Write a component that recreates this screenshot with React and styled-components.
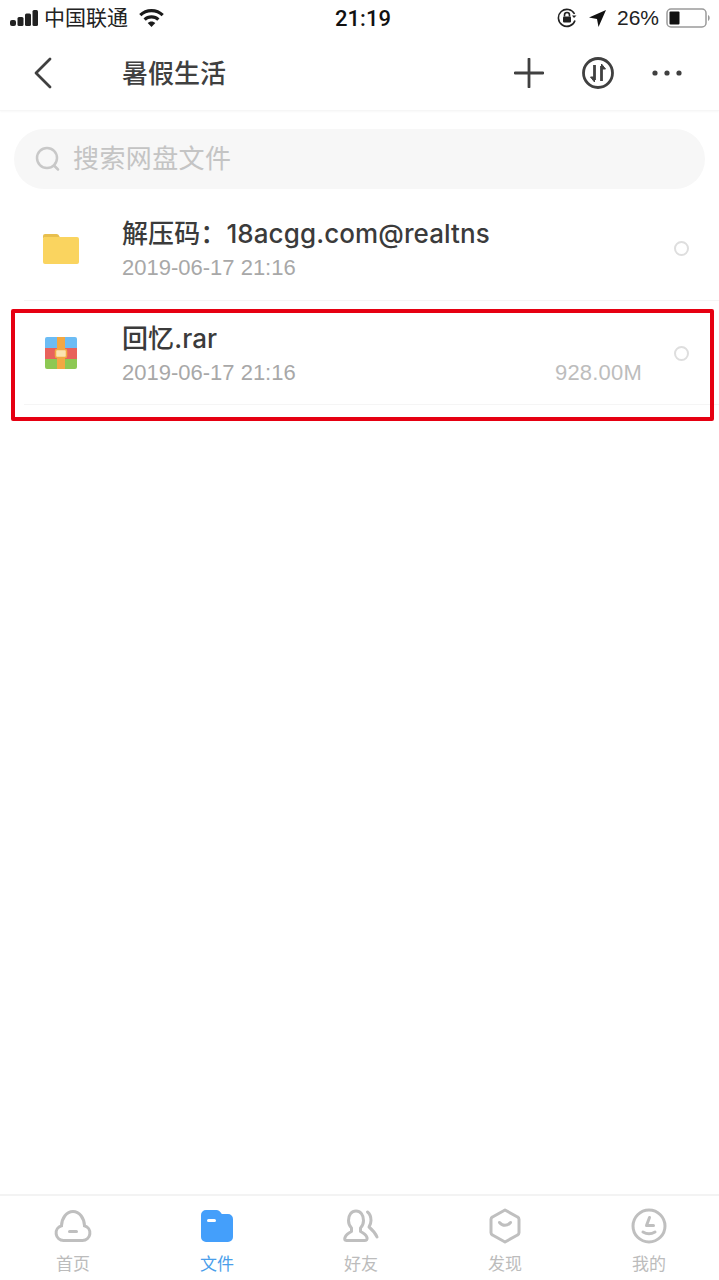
import React from 'react';
import styled, { createGlobalStyle } from 'styled-components';

const GlobalStyle = createGlobalStyle`
  html, body {
    margin: 0;
    padding: 0;
    background: #fff;
  }
  * {
    box-sizing: border-box;
  }
`;

const FONT = `"Liberation Sans", "Noto Sans CJK SC", sans-serif`;

const Page = styled.div`
  width: 719px;
  height: 1280px;
  display: flex;
  flex-direction: column;
  background: #fff;
  font-family: ${FONT};
  overflow: hidden;
`;

const StatusBar = styled.div`
  height: 36px;
  padding: 0 9px 0 10px;
  display: grid;
  grid-template-columns: 1fr auto 1fr;
  align-items: center;
  color: #1c1c1c;
`;

const StatusLeft = styled.div`
  display: flex;
  align-items: center;
  gap: 6px;
  font-size: 21px;
  color: #222;
`;

const Carrier = styled.span`
  padding-bottom: 4px;
  margin-right: 5px;
`;

const StatusRight = styled.div`
  display: flex;
  align-items: center;
  justify-content: flex-end;
  gap: 7px;
  font-size: 21px;
  color: #222;
`;

const StatusGlyphs = styled.div`
  display: flex;
  align-items: center;
  gap: 12px;
  margin-right: 4px;
`;

const Clock = styled.div`
  margin-left: 6px;
  font-family: Roboto, sans-serif;
  font-size: 22px;
  font-weight: 500;
  color: #111;
`;

const Header = styled.div`
  height: 75px;
  padding: 0 37px 0 33px;
  display: flex;
  align-items: center;
  border-bottom: 1px solid #f6f6f6;
  box-shadow: 0 1px 2px rgba(0, 0, 0, 0.03);
`;

const Title = styled.div`
  margin-left: 69px;
  padding-bottom: 4px;
  flex: 1;
  font-size: 26px;
  font-weight: 500;
  color: #404040;
`;

const HeaderActions = styled.div`
  display: flex;
  align-items: center;
  gap: 38px;
`;

const SearchWrap = styled.div`
  padding: 18px 14px 0;
`;

const SearchBar = styled.div`
  height: 60px;
  border-radius: 30px;
  background: #f7f7f7;
  display: flex;
  align-items: center;
  padding-left: 21px;
  gap: 12px;
  font-size: 26px;
  letter-spacing: 0.4px;
  color: #c4c4c4;
`;

const SearchText = styled.span`
  padding-bottom: 5px;
`;

const List = styled.div`
  position: relative;
  margin-top: 8px;
`;

const Row = styled.div`
  height: 104px;
  margin-left: 24px;
  padding: ${(p) => p.$top}px 30px 0 17px;
  display: flex;
  border-bottom: 1px solid #f5f5f5;
`;

const FileIcon = styled.div`
  width: 40px;
  height: ${(p) => p.$height}px;
  margin-right: 41px;
  display: flex;
  align-items: center;
  justify-content: center;
`;

const RowText = styled.div`
  flex: 1;
  min-width: 0;
`;

const FileName = styled.div`
  font-family: Inter, "Noto Sans CJK SC", sans-serif;
  font-size: 26px;
  line-height: 34px;
  font-weight: 500;
  letter-spacing: 0.1px;
  color: #3b3b3b;
`;

const FileMeta = styled.div`
  margin-top: 2px;
  padding-right: 32px;
  display: flex;
  justify-content: space-between;
  font-size: 22px;
  line-height: 30px;
  color: #a8a8a8;
`;

const FileSize = styled.span`
  letter-spacing: 0.2px;
  color: #bdbdbd;
`;

const Radio = styled.div`
  width: 15px;
  height: 15px;
  margin-top: 24px;
  border: 2px solid #dedede;
  border-radius: 50%;
`;

const Highlight = styled.div`
  position: absolute;
  left: 11px;
  top: 112px;
  width: 703px;
  height: 112px;
  border: 4px solid #e60012;
  border-radius: 2px;
  pointer-events: none;
`;

const Spacer = styled.div`
  flex: 1;
`;

const TabBar = styled.div`
  height: 86px;
  padding-left: 1px;
  border-top: 2px solid #f3f3f3;
  display: grid;
  grid-template-columns: repeat(5, 144px);
`;

const Tab = styled.div`
  display: flex;
  flex-direction: column;
  align-items: center;
  padding-top: 10px;
  font-size: 17px;
  line-height: 22px;
  color: ${(p) => (p.$active ? '#4a9eea' : '#bcbcbc')};
`;

const TabIcon = styled.div`
  height: 40px;
  margin-bottom: 8px;
  display: flex;
  align-items: center;
`;

const tabs = [
  {
    label: '首页',
    icon: (
      <svg width="38" height="32" viewBox="0 0 38 32" fill="none" stroke="#bfbfbf" strokeWidth="3" strokeLinecap="round">
        <path d="M9.500 30.500h19a7.500 7.500 0 0 0 2-14.700C30.200 8 25.500 1.500 19 1.500S7.800 8 7.500 15.800a7.500 7.500 0 0 0 2 14.700z" />
        <path d="M15.500 21.500h7" />
      </svg>
    ),
  },
  {
    label: '文件',
    active: true,
    icon: (
      <svg width="32" height="32" viewBox="0 0 32 32">
        <path d="M5 0h10.500c2 0 3 1 4.200 2.600L20.800 4H27a5 5 0 0 1 5 5v18a5 5 0 0 1-5 5H5a5 5 0 0 1-5-5V5a5 5 0 0 1 5-5z" fill="#449ffb" />
        <rect x="6" y="9" width="9" height="3" rx="1.500" fill="#fff" />
      </svg>
    ),
  },
  {
    label: '好友',
    icon: (
      <svg width="36" height="34" viewBox="0 0 36 34" fill="none" stroke="#bfbfbf" strokeWidth="3" strokeLinecap="round" strokeLinejoin="round">
        <path d="M3.500 31.500h18c2 0 3-1.200 2.500-3-1-2.800-3.500-4.600-6.500-6v-3.500c2-2 3-4.500 3-7.500C20.500 6 17.500 2 13 2S5.500 6 5.500 11.500c0 3 1 5.500 3 7.500v3.500c-3 1.400-5.500 3.200-6.500 6-.5 1.800-.5 3 1.500 3z" />
        <path d="M24.500 3c2.500 2 3.500 5 3.500 8.500 0 2.500-.8 4.500-2 6.500 3 2.500 6 5.500 8 10" />
      </svg>
    ),
  },
  {
    label: '发现',
    icon: (
      <svg width="32" height="36" viewBox="0 0 32 36" fill="none" stroke="#bfbfbf" strokeWidth="3" strokeLinecap="round" strokeLinejoin="round">
        <path d="M16 2l12.500 7a2.500 2.500 0 0 1 1.500 2.200v13.600a2.500 2.500 0 0 1-1.500 2.200L16 34 3.500 27A2.500 2.500 0 0 1 2 24.800V11.200A2.500 2.500 0 0 1 3.500 9z" />
        <path d="M10.500 14.500c1.500 1.800 3.500 2.800 5.500 2.800s4-1 5.500-2.800" />
      </svg>
    ),
  },
  {
    label: '我的',
    icon: (
      <svg width="36" height="36" viewBox="0 0 36 36" fill="none" stroke="#bfbfbf" strokeWidth="3" strokeLinecap="round" strokeLinejoin="round">
        <circle cx="18" cy="18" r="16" />
        <path d="M18.500 9.500l-3 8h7" />
        <path d="M12 24c3.500 2 8.500 2 12 0" />
      </svg>
    ),
  },
];

function SignalIcon() {
  return (
    <svg width="28" height="16" viewBox="0 0 28 16" fill="#222">
      <rect x="0" y="10" width="6" height="6" rx="2" />
      <rect x="7.500" y="7" width="6" height="9" rx="1.500" />
      <rect x="15" y="3.500" width="6" height="12.500" rx="1.500" />
      <rect x="22.500" y="0" width="5.500" height="16" rx="1.500" />
    </svg>
  );
}

function WifiIcon() {
  return (
    <svg width="25" height="18" viewBox="0 0 25 18" fill="#1a1a1a">
      <path d="M12.500 0C17.300 0 21.600 1.900 24.800 5l-2.200 2.300c-2.600-2.500-6.200-4-10.100-4s-7.500 1.500-10.100 4L.2 5C3.400 1.900 7.700 0 12.500 0z" />
      <path d="M12.500 6.300c3.100 0 5.900 1.200 8 3.200l-2.300 2.300c-1.500-1.400-3.500-2.300-5.700-2.300s-4.200.9-5.700 2.300L4.500 9.500c2.100-2 4.900-3.200 8-3.200z" />
      <path d="M12.500 12.400c1.500 0 2.800.6 3.800 1.500L12.500 18l-3.800-4.100c1-.9 2.300-1.500 3.800-1.500z" />
    </svg>
  );
}

function LockIcon() {
  return (
    <svg width="20" height="20" viewBox="0 0 20 20" fill="none" stroke="#222" strokeWidth="1.600">
      <path d="M18 12.500A8.500 8.500 0 1 1 17.500 6" />
      <path d="M19.500 7.500l-2.500 2.500-2-2.500z" fill="#222" stroke="none" />
      <rect x="6" y="8.500" width="8" height="6" rx="1" fill="#222" stroke="none" />
      <path d="M7.500 8.500V7a2.500 2.500 0 0 1 5 0v1.500" />
    </svg>
  );
}

function LocationIcon() {
  return (
    <svg width="17" height="17" viewBox="0 0 17 17" fill="#111">
      <path d="M17 0L9.500 17 8 9 0 7.500z" />
    </svg>
  );
}

function BatteryIcon() {
  return (
    <svg width="44" height="20" viewBox="0 0 44 20" fill="none">
      <rect x="1" y="1" width="39" height="18" rx="4" stroke="#9a9a9a" strokeWidth="1.500" />
      <rect x="3.500" y="3.500" width="10" height="13" rx="1" fill="#111" />
      <path d="M42 7v6c1-.4 1.700-1.600 1.700-3S43 7.400 42 7z" fill="#9a9a9a" />
    </svg>
  );
}

function FolderIcon() {
  return (
    <svg width="36" height="31" viewBox="0 0 36 31">
      <path d="M0 3a2 2 0 0 1 2-2h11.500c1.500 0 2.500 1 3.500 3.500H2a2 2 0 0 0-2 2z" fill="#e8bf4e" />
      <path d="M0 6a2 2 0 0 1 2-2h32a2 2 0 0 1 2 2v23a2 2 0 0 1-2 2H2a2 2 0 0 1-2-2z" fill="#fad45f" />
    </svg>
  );
}

function RarIcon() {
  return (
    <svg width="32" height="32" viewBox="0 0 32 32">
      <path d="M2 0h28a2 2 0 0 1 2 2v9H0V2a2 2 0 0 1 2-2z" fill="#6cbcf4" />
      <rect x="0" y="11" width="32" height="11" fill="#e8625b" />
      <path d="M0 22h32v8a2 2 0 0 1-2 2H2a2 2 0 0 1-2-2z" fill="#8dc853" />
      <rect x="12" y="0" width="8" height="32" fill="#f2a843" />
      <rect x="10.500" y="12.500" width="11" height="8" rx="1.500" fill="#fbe3b0" stroke="#f2a843" strokeWidth="1.500" />
    </svg>
  );
}

export default function App() {
  return (
    <Page>
      <GlobalStyle />
      <StatusBar>
        <StatusLeft>
          <SignalIcon />
          <Carrier>中国联通</Carrier>
          <WifiIcon />
        </StatusLeft>
        <Clock>21:19</Clock>
        <StatusRight>
          <StatusGlyphs>
            <LockIcon />
            <LocationIcon />
          </StatusGlyphs>
          <span>26%</span>
          <BatteryIcon />
        </StatusRight>
      </StatusBar>

      <Header>
        <svg width="20" height="32" viewBox="0 0 20 32" fill="none" stroke="#404040" strokeWidth="2.800" strokeLinecap="round" strokeLinejoin="round">
          <path d="M17 2L3 16l14 14" />
        </svg>
        <Title>暑假生活</Title>
        <HeaderActions>
          <svg width="30" height="30" viewBox="0 0 30 30" stroke="#404040" strokeWidth="2.800" strokeLinecap="round">
            <path d="M15 1v28M1 15h28" />
          </svg>
          <svg width="32" height="32" viewBox="0 0 32 32" fill="none" stroke="#404040" strokeWidth="2.800">
            <circle cx="16" cy="16" r="14.500" />
            <path d="M12.500 8v15" />
            <path d="M19.500 24V9" />
            <path d="M12.500 25l-4-5h4z" fill="#404040" strokeWidth="1" />
            <path d="M19.500 7l4 5h-4z" fill="#404040" strokeWidth="1" />
          </svg>
          <svg width="30" height="6" viewBox="0 0 30 6" fill="#404040">
            <circle cx="3" cy="3" r="2.600" />
            <circle cx="15" cy="3" r="2.600" />
            <circle cx="27" cy="3" r="2.600" />
          </svg>
        </HeaderActions>
      </Header>

      <SearchWrap>
        <SearchBar>
          <svg width="26" height="26" viewBox="0 0 26 26" fill="none" stroke="#c8c8c8" strokeWidth="2.500" strokeLinecap="round">
            <circle cx="12" cy="12" r="10" />
            <path d="M19.500 20l3.500 3.500" />
          </svg>
          <SearchText>搜索网盘文件</SearchText>
        </SearchBar>
      </SearchWrap>

      <List>
        <Row $top={20}>
          <FileIcon $height={62}><FolderIcon /></FileIcon>
          <RowText>
            <FileName>解压码：18acgg.com@realtns</FileName>
            <FileMeta>
              <span>2019-06-17 21:16</span>
            </FileMeta>
          </RowText>
          <Radio />
        </Row>
        <Row $top={21}>
          <FileIcon $height={62}><RarIcon /></FileIcon>
          <RowText>
            <FileName>回忆.rar</FileName>
            <FileMeta>
              <span>2019-06-17 21:16</span>
              <FileSize>928.00M</FileSize>
            </FileMeta>
          </RowText>
          <Radio />
        </Row>
        <Highlight />
      </List>

      <Spacer />

      <TabBar>
        {tabs.map((t) => (
          <Tab key={t.label} $active={t.active}>
            <TabIcon>{t.icon}</TabIcon>
            {t.label}
          </Tab>
        ))}
      </TabBar>
    </Page>
  );
}
